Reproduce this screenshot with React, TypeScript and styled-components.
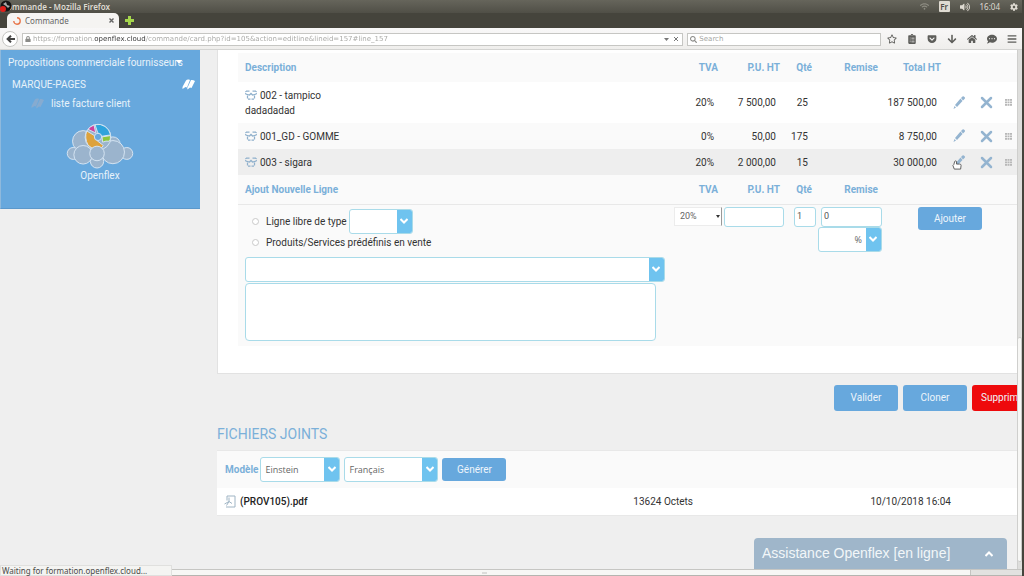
import React from 'react';
import styled, { createGlobalStyle, css } from 'styled-components';
import { FaRegStar, FaClipboardList, FaGetPocket, FaArrowDown, FaHome, FaBars, FaCommentDots, FaLock, FaSearch, FaVolumeUp, FaWifi, FaCog } from 'react-icons/fa';

const blue = '#67a8dd';
const headingBlue = '#7bb0d9';
const sky = '#6fc3ef';
const iconBlue = '#94b4d0';
const line = '#a9dbe9';
const uiFont = '"Noto Sans", "Open Sans", sans-serif';

const Global = createGlobalStyle`
  * { box-sizing: border-box; }
  body { margin: 0; overflow: hidden; font-family: Roboto, sans-serif; font-size: 10px; color: #333; }
  button, input, select, textarea { font: inherit; color: inherit; margin: 0; padding: 0; }
  svg { display: block; flex: none; }
`;

const Desktop = styled.div`
  height: 100vh;
  display: flex;
  flex-direction: column;
  background: #efefef;
  border-right: 2px solid #45443c;
`;

const TitleBar = styled.header`
  height: 13px;
  display: flex;
  align-items: center;
  gap: 10px;
  padding: 0 4px 0 2px;
  background: linear-gradient(#66655b, #504f47);
  color: #dfdbd2;
  font: 600 8px/13px ${uiFont};
`;

const WindowTitle = styled.div`
  position: relative;
  flex: 1;
`;

const CloseBadge = styled.span`
  position: absolute;
  left: -2px;
  top: 0;
`;

const Indicator = styled.span`
  display: flex;
  font-weight: 400;
`;

const Keyboard = styled.span`
  width: 11px;
  height: 11px;
  border-radius: 1px;
  background: #dfdbd2;
  color: #504f47;
  text-align: center;
  line-height: 11px;
`;

const TabStrip = styled.div`
  height: 15px;
  display: flex;
  align-items: center;
  gap: 6px;
  padding-left: 7px;
  background: #45443c;
`;

const Tab = styled.div`
  width: 112px;
  height: 15px;
  display: flex;
  align-items: center;
  gap: 4px;
  padding: 0 5px 0 6px;
  border-radius: 5px 5px 0 0;
  background: #f5f4f2;
  color: #666;
  font: 8px/15px ${uiFont};
  span { flex: 1; }
`;

const PlainButton = styled.button`
  display: flex;
  align-items: center;
  justify-content: center;
  border: 0;
  background: none;
  cursor: pointer;
`;

const Toolbar = styled.nav`
  height: 22px;
  display: flex;
  align-items: center;
  gap: 4px;
  padding: 1px 5px 0 2px;
  border-bottom: 1px solid #d4d4d2;
  background: linear-gradient(#f9f8f8, #efeeec);
  color: #5d5d5a;
`;

const BackButton = styled(PlainButton)`
  width: 16px;
  height: 16px;
  border: 1px solid #c5c5c2;
  border-radius: 8px;
  background: #fff;
`;

const Field = styled.label<{ $grow: number }>`
  flex: ${p => p.$grow} 1 0;
  min-width: 0;
  height: 13px;
  display: flex;
  align-items: center;
  gap: 2px;
  padding: 0 2px;
  border: 1px solid #c6c6c3;
  background: #fff;
  color: #8b8b88;
`;

const BarInput = styled.input<{ $url?: boolean }>`
  flex: 1;
  min-width: 0;
  height: 11px;
  border: 0;
  outline: 0;
  background: none;
  font: 7px/11px "DejaVu Sans", sans-serif;
  ${p => p.$url && css`
    color: transparent;
    background: linear-gradient(90deg, #a5a5a2 61px, #333 61px, #333 113px, #a5a5a2 113px);
    background-clip: text;
    -webkit-background-clip: text;
  `}
  &::placeholder { color: #a5a5a2; opacity: 1; }
`;

const Tools = styled.div`
  display: flex;
  align-items: center;
  gap: 10px;
  padding-left: 2px;
`;

const Viewport = styled.div`
  flex: 1;
  min-height: 0;
  display: flex;
`;

const Page = styled.div`
  position: relative;
  flex: 1;
  min-width: 0;
  display: flex;
  align-items: flex-start;
  gap: 17px;
  overflow: hidden;
`;

const Sidebar = styled.aside`
  width: 200px;
  height: 159px;
  flex: none;
  display: flex;
  flex-direction: column;
  padding: 3px 5px 0 7px;
  border-left: 1px solid #8fb9dc;
  border-bottom: 1px solid #5b98cb;
  background: ${blue};
  color: #e8f2fa;
`;

const MenuLink = styled.a<{ $indent?: number }>`
  height: 18px;
  display: flex;
  align-items: center;
  gap: 7px;
  padding-left: ${p => p.$indent || 0}px;
  color: inherit;
  text-decoration: none;
  white-space: nowrap;
`;

const MenuHeading = styled.h2`
  display: flex;
  justify-content: space-between;
  align-items: center;
  height: 19px;
  margin: 4px 0 0;
  padding-left: 4px;
  font-size: 10px;
  font-weight: 400;
`;

const Brand = styled.a`
  display: flex;
  flex-direction: column;
  align-items: center;
  gap: 1px;
  margin: 11px 3px 0 0;
  color: inherit;
  text-decoration: none;
  line-height: 12px;
`;

const Caret = styled.span`
  margin-left: -14px;
  border: 3px solid transparent;
  border-top: 4px solid #fff;
  border-bottom: 0;
`;

const Main = styled.main`
  flex: 1;
  min-width: 0;
`;

const OrderCard = styled.section`
  padding: 3px 0 27px 20px;
  border: 1px solid #e2e2e2;
  border-top: 0;
  border-right: 0;
  background: #fff;
`;

const Table = styled.table`
  width: 100%;
  table-layout: fixed;
  border-collapse: collapse;
  font: 10px/15px Roboto, sans-serif;
`;

const Row = styled.tr<{ $bg: string; $h: number }>`
  height: ${p => p.$h}px;
  background: ${p => p.$bg};
`;

const Th = styled.th<{ $left?: boolean }>`
  padding: 0 ${p => (p.$left ? 0 : 4)}px 0 ${p => (p.$left ? 7 : 0)}px;
  text-align: ${p => (p.$left ? 'left' : 'right')};
  color: ${headingBlue};
  font-weight: 700;
  white-space: nowrap;
`;

const Td = styled.td<{ $left?: boolean }>`
  padding: 0 ${p => (p.$left ? 0 : 8)}px 0 ${p => (p.$left ? 7 : 0)}px;
  text-align: ${p => (p.$left ? 'left' : 'right')};
  white-space: nowrap;
`;

const IconCell = styled.td`
  position: relative;
  padding: 0;
  button { margin: 0 auto; }
`;

const Pointer = styled.span`
  position: absolute;
  left: 7px;
  top: 11px;
`;

const ProductName = styled.div`
  display: flex;
  align-items: center;
  gap: 3px;
`;

const FormRow = styled.tr`
  border-top: 1px solid #e8e8e8;
  background: #fafafa;
`;

const FormCell = styled.td<{ $left?: number }>`
  padding: 2px 0 0 ${p => p.$left || 0}px;
  vertical-align: top;
`;

const Choice = styled.div<{ $h: number }>`
  height: ${p => p.$h}px;
  display: flex;
  align-items: center;
  gap: 2px;
  padding-left: 7px;
`;

const ChoiceLabel = styled.label`
  display: flex;
  align-items: center;
  gap: 7px;
`;

const ProductPicker = styled.div`
  padding-top: 7px;
`;

const Radio = styled.input`
  appearance: none;
  width: 7px;
  height: 7px;
  border: 1px solid #c9c9c9;
  border-radius: 50%;
  background: #fff;
`;

const SelectBox = styled.span<{ $w: string }>`
  width: ${p => p.$w};
  height: 25px;
  display: grid;
  grid-template-columns: 1fr 15px;
  overflow: hidden;
  border: 1px solid ${line};
  border-radius: 3px;
  background: #fff;
`;

const Select = styled.select<{ $right?: boolean }>`
  grid-area: 1 / 1 / 2 / 3;
  appearance: none;
  border: 0;
  outline: 0;
  background: none;
  padding: 0 19px 0 4px;
  font: 9px/23px "Open Sans", sans-serif;
  color: #666;
  text-align: ${p => (p.$right ? 'right' : 'left')};
  text-align-last: ${p => (p.$right ? 'right' : 'left')};
`;

const Chevron = styled.span`
  grid-area: 1 / 2 / 2 / 3;
  display: flex;
  align-items: center;
  justify-content: center;
  background: ${sky};
  pointer-events: none;
`;

const Note = styled.textarea`
  display: block;
  width: calc(100% - 18px);
  height: 58px;
  margin: 1px 0 5px;
  resize: none;
  border: 1px solid ${line};
  border-radius: 4px;
  background: #fff;
`;

const TextInput = styled.input<{ $w: number }>`
  display: block;
  width: ${p => p.$w}px;
  height: 20px;
  margin-left: auto;
  padding: 0 2px 1px;
  border: 1px solid ${line};
  border-radius: 3px;
  background: #fff;
  font-size: 9px;
  color: #555;
`;

const RateBox = styled.span`
  display: flex;
  align-items: center;
  height: 19px;
  padding-right: 1px;
  border: 1px solid #ececec;
  border-right: 1px solid #999;
  background: #fff;
  select {
    flex: 1;
    min-width: 0;
    appearance: none;
    border: 0;
    background: none;
    padding-left: 5px;
    font-size: 9px;
    color: #666;
  }
  span { margin: 0; border: 2px solid transparent; border-top: 3px solid #333; border-bottom: 0; }
`;

const Button = styled.button<{ $h: number; $danger?: boolean }>`
  width: 64px;
  height: ${p => p.$h}px;
  flex: none;
  border: 0;
  border-radius: 3px;
  background: ${p => (p.$danger ? '#ee0a0c' : blue)};
  color: #eef5fb;
  font-family: Roboto, sans-serif;
  cursor: pointer;
`;

const Actions = styled.div`
  display: flex;
  justify-content: flex-end;
  gap: 5px;
  margin: 11px -19px 15px 0;
`;

const SectionTitle = styled.h2`
  margin: 0 0 8px;
  color: ${headingBlue};
  font-size: 14px;
  font-weight: 400;
  line-height: 16px;
`;

const FilesCard = styled.section`
  border: 1px solid #e8e8e8;
  border-width: 1px 0;
  background: #fff;
`;

const Generator = styled.form`
  height: 37px;
  display: flex;
  align-items: center;
  gap: 4px;
  padding-left: 8px;
  background: #fafafa;
  label { display: flex; align-items: center; gap: 2px; color: ${headingBlue}; font-weight: 700; }
`;

const FileLink = styled.a`
  display: flex;
  align-items: center;
  gap: 4px;
  color: #222;
  text-decoration: none;
  font-weight: 500;
`;

const Chat = styled.button`
  position: absolute;
  right: 10px;
  bottom: 0;
  width: 253px;
  height: 31px;
  display: flex;
  align-items: center;
  justify-content: space-between;
  padding: 0 14px 0 8px;
  border: 0;
  border-radius: 4px 4px 0 0;
  background: #9fb6ca;
  color: #f2f6f9;
  font: 14px/31px "Liberation Sans", sans-serif;
`;

const VScroll = styled.div`
  width: 5px;
  display: flex;
  flex-direction: column;
  justify-content: flex-end;
  padding-bottom: 7px;
  border-left: 1px solid #cfcfcd;
  background: #dededc;
`;

const VThumb = styled.div`
  height: 44%;
  border: 1px solid #c9c9c7;
  border-left: 0;
  border-radius: 2px;
  background: #f7f7f5;
`;

const HScroll = styled.footer`
  position: relative;
  height: 7px;
  border-top: 1px solid #c6c6c3;
  border-bottom: 1px solid #b5b5b0;
  background: #e2e2e0;
`;

const HThumb = styled.div`
  width: 95%;
  height: 5px;
  display: flex;
  align-items: center;
  justify-content: center;
  border-right: 1px solid #c4c4c1;
  background: #f7f7f5;
  &::after { content: ''; width: 5px; height: 2px; background: #dcdcda; }
`;

const Status = styled.div`
  position: absolute;
  left: 0;
  bottom: -1px;
  width: 172px;
  height: 11px;
  padding-left: 1px;
  border: 1px solid #e0e0de;
  background: #f4f4f2;
  color: #4a4a48;
  font: 8px/10px ${uiFont};
  white-space: nowrap;
`;

const BoxIcon = () => (
  <svg width="12" height="11" viewBox="0 0 24 22" fill="none" stroke="#8fb0cc" strokeWidth="2.5">
    <path d="M2 2h7M15 2h7M1 8l8 2 3-3 3 3 8-2" />
    <path d="M2 2l-1 6M22 2l1 6" strokeDasharray="2 2" />
    <path d="M5 11v6M19 11v6M6 18h5M13 18h5" />
  </svg>
);

const PencilIcon = () => (
  <svg width="12" height="14" viewBox="0 0 24 28" fill={iconBlue}>
    <path d="M16 4l3-3q2-1 4 1t0 4l-3 3zM15 5l4 5L8 22l-4-4zM3 20l3 3-5 3z" />
  </svg>
);

const CrossIcon = () => (
  <svg width="13" height="13" viewBox="0 0 26 26" stroke={iconBlue} strokeWidth="5" strokeLinecap="round">
    <path d="M4 4l18 18M22 4L4 22" />
  </svg>
);

const GripIcon = () => (
  <svg width="7" height="7" viewBox="0 0 7 7" fill="#b8b8b8">
    {[0, 2.5, 5].map(y => [0, 2.5, 5].map(x => <rect key={`${x}-${y}`} x={x} y={y} width="2" height="1.8" />))}
  </svg>
);

const HandIcon = () => (
  <svg width="10" height="10" viewBox="0 0 22 22" fill="#fff" stroke="#555" strokeWidth="2" strokeLinejoin="round">
    <path d="M4 10L6 3q2-2 4 0v6h7q3 0 3 3l-1 8H5L2 12z" />
  </svg>
);

const BookmarkIcon = ({ fill }: { fill: string }) => (
  <svg width="13" height="11" viewBox="0 0 26 22" fill={fill}>
    <path d="M8 3q2-3 6-2l2 1-6 15-3-1-6 4q-1-4 2-8zM18 2q4-1 8 2l-7 14-3-1-5 4q-1-4 2-8z" />
  </svg>
);

const PdfIcon = () => (
  <svg width="12" height="13" viewBox="0 0 24 26" fill="none" stroke="#9fb4c4" strokeWidth="2">
    <path d="M6 11V2h16v22H4M1 18l9-5 6 4M10 5v8l-5 8" />
  </svg>
);

const Down = ({ up }: { up?: boolean }) => (
  <svg width="8" height="6" viewBox="0 0 8 6" fill="none" stroke="#fff" strokeWidth="2">
    <path d={up ? 'M0.5 5L4 1.5 7.5 5' : 'M0.5 1L4 4.5 7.5 1'} />
  </svg>
);

const Logo = () => (
  <svg width="68" height="46" viewBox="47 39 202 139" fill="#9bb4cd" stroke="#d5e4f2" strokeWidth="3">
    <circle cx="97" cy="94" r="32" />
    <circle cx="187" cy="103" r="22" />
    <circle cx="67" cy="131" r="18" />
    <circle cx="229" cy="131" r="18" />
    <circle cx="139" cy="155" r="20" />
    <circle cx="97" cy="135" r="28" />
    <circle cx="187" cy="127" r="35" />
    <circle cx="142" cy="82" r="39" />
    <path fill="#2fa3dc" d="M133 44a39 39 0 0 1 47 31l-26 4-13-11z" />
    <path fill="#8cc63f" d="M180 77q0 14-4 17-10-2-20 3l-2-16z" />
    <path fill="#dda23c" d="M108 63l23 14q-1 10 9 16l18 14q-4 8-14 13-22-2-32-14-12-22-4-43z" />
    <path fill="#cf3f9c" d="M112 58q7-9 18-13l5 24z" />
    <circle cx="142" cy="81" r="11" fill={blue} />
    <circle cx="139" cy="131" r="22" />
  </svg>
);

type PickerProps = { label: string; width: string; options: string[]; right?: boolean };
const Picker = ({ label, width, options, right }: PickerProps) => (
  <SelectBox $w={width}>
    <Select aria-label={label} $right={right}>
      {options.map(o => <option key={o}>{o}</option>)}
    </Select>
    <Chevron><Down /></Chevron>
  </SelectBox>
);

const lines = [
  { name: '002 - tampico', note: 'dadadadad', tva: '20%', pu: '7 500,00', qty: '25', total: '187 500,00', h: 41, bg: '#fff' },
  { name: '001_GD - GOMME', tva: '0%', pu: '50,00', qty: '175', total: '8 750,00', h: 26, bg: '#fafafa' },
  { name: '003 - sigara', tva: '20%', pu: '2 000,00', qty: '15', total: '30 000,00', h: 26, bg: '#eeeeee', hover: true },
];

const toolIcons = [
  { label: 'Marquer cette page', Icon: FaRegStar },
  { label: 'Marque-pages', Icon: FaClipboardList },
  { label: 'Pocket', Icon: FaGetPocket },
  { label: 'Téléchargements', Icon: FaArrowDown },
  { label: 'Accueil', Icon: FaHome },
  { label: 'Discussion', Icon: FaCommentDots },
  { label: 'Menu', Icon: FaBars },
];

export default function App() {
  return (
    <Desktop>
      <Global />
      <TitleBar>
        <WindowTitle>
          Commande - Mozilla Firefox
          <CloseBadge>
            <svg width="12" height="12" viewBox="0 0 12 12">
              <circle cx="6" cy="6" r="5.5" fill="#161616" />
              <path d="M3 4l3-2 1 3 3 1-2 2-2-2z" fill="#aaa" />
              <circle cx="3" cy="9" r="3" fill="#e0201c" />
            </svg>
          </CloseBadge>
        </WindowTitle>
        <Indicator><FaWifi size={9} color="#8d8c82" /></Indicator>
        <Keyboard>Fr</Keyboard>
        <Indicator><FaVolumeUp size={10} /></Indicator>
        <Indicator>16:04</Indicator>
        <Indicator><FaCog size={8} /></Indicator>
      </TitleBar>
      <TabStrip>
        <Tab>
          <svg width="8" height="8" viewBox="0 0 8 8" fill="none" stroke="#e8764a" strokeWidth="1.4"><path d="M4 .8A3.2 3.2 0 1 1 .8 4" /></svg>
          <span>Commande</span>
          <PlainButton aria-label="Fermer l’onglet">
            <svg width="5" height="5" viewBox="0 0 5 5" stroke="#666" strokeWidth="1.4"><path d="M.5.5l4 4M4.5.5l-4 4" /></svg>
          </PlainButton>
        </Tab>
        <PlainButton aria-label="Nouvel onglet">
          <svg width="9" height="9" viewBox="0 0 9 9" stroke="#a5d64c" strokeWidth="3"><path d="M4.500 0v9M0 4.500h9" /></svg>
        </PlainButton>
      </TabStrip>
      <Toolbar>
        <BackButton aria-label="Page précédente">
          <svg width="9" height="8" viewBox="0 0 9 8" fill="none" stroke="#444" strokeWidth="2"><path d="M9 4H2M5 .7L1.600 4 5 7.300" /></svg>
        </BackButton>
        <Field $grow={667}>
          <FaLock size={6} />
          <BarInput $url aria-label="Adresse" defaultValue="https://formation.openflex.cloud/commande/card.php?id=105&action=editline&lineid=157#line_157" />
          <svg width="16" height="6" viewBox="0 0 16 6" fill="#777"><path d="M0 2h5L2.500 5z" /><path d="M10 1l4 4M14 1l-4 4" stroke="#777" /></svg>
        </Field>
        <Field $grow={191}>
          <FaSearch size={7} />
          <BarInput aria-label="Recherche" placeholder="Search" />
        </Field>
        <Tools>
          {toolIcons.map(({ label, Icon }) => (
            <PlainButton key={label} aria-label={label}><Icon size={10} /></PlainButton>
          ))}
        </Tools>
      </Toolbar>
      <Viewport>
        <Page>
          <Sidebar>
            <MenuLink href="#propositions">Propositions commerciale fournisseurs<Caret /></MenuLink>
            <MenuHeading>MARQUE-PAGES<BookmarkIcon fill="#fff" /></MenuHeading>
            <MenuLink href="#factures" $indent={23}><BookmarkIcon fill="#86abd0" />liste facture client</MenuLink>
            <Brand href="#openflex"><Logo />Openflex</Brand>
          </Sidebar>
          <Main>
            <OrderCard>
              <Table>
                <colgroup>
                  <col />
                  {[48, 62, 32, 66, 63, 28, 28, 16].map((w, i) => <col key={i} width={w} />)}
                </colgroup>
                <tbody>
                  <Row $h={29} $bg="#fafafa">
                    <Th $left>Description</Th><Th>TVA</Th><Th>P.U. HT</Th><Th>Qté</Th><Th>Remise</Th><Th>Total HT</Th>
                    <td colSpan={3} />
                  </Row>
                  {lines.map(l => (
                    <Row key={l.name} $h={l.h} $bg={l.bg}>
                      <Td $left>
                        <ProductName><BoxIcon />{l.name}</ProductName>
                        {l.note}
                      </Td>
                      <Td>{l.tva}</Td><Td>{l.pu}</Td><Td>{l.qty}</Td><Td /><Td>{l.total}</Td>
                      <IconCell>
                        <PlainButton aria-label={`Modifier ${l.name}`}><PencilIcon /></PlainButton>
                        {l.hover && <Pointer><HandIcon /></Pointer>}
                      </IconCell>
                      <IconCell><PlainButton aria-label={`Supprimer ${l.name}`}><CrossIcon /></PlainButton></IconCell>
                      <IconCell><PlainButton aria-label={`Déplacer ${l.name}`}><GripIcon /></PlainButton></IconCell>
                    </Row>
                  ))}
                  <Row $h={29} $bg="#fafafa">
                    <Th $left>Ajout Nouvelle Ligne</Th><Th>TVA</Th><Th>P.U. HT</Th><Th>Qté</Th><Th>Remise</Th>
                    <td colSpan={4} />
                  </Row>
                  <FormRow>
                    <FormCell $left={7}>
                      <Choice $h={29}>
                        <ChoiceLabel><Radio type="radio" name="kind" />Ligne libre de type</ChoiceLabel>
                        <Picker label="Type de ligne" width="64px" options={['']} />
                      </Choice>
                      <Choice $h={14}>
                        <ChoiceLabel><Radio type="radio" name="kind" />Produits/Services prédéfinis en vente</ChoiceLabel>
                      </Choice>
                      <ProductPicker><Picker label="Produit" width="calc(100% - 9px)" options={['']} /></ProductPicker>
                      <Note aria-label="Description de la ligne" />
                    </FormCell>
                    <FormCell>
                      <RateBox><select aria-label="TVA"><option>20%</option></select><Caret /></RateBox>
                    </FormCell>
                    <FormCell><TextInput $w={60} aria-label="P.U. HT" /></FormCell>
                    <FormCell><TextInput $w={22} aria-label="Qté" defaultValue="1" /></FormCell>
                    <FormCell $left={2}>
                      <TextInput $w={61} aria-label="Remise" defaultValue="0" />
                      <Picker label="Type de remise" width="64px" options={['%']} right />
                    </FormCell>
                    <FormCell $left={36} colSpan={4}><Button $h={23}>Ajouter</Button></FormCell>
                  </FormRow>
                </tbody>
              </Table>
            </OrderCard>
            <Actions>
              <Button $h={26}>Valider</Button>
              <Button $h={26}>Cloner</Button>
              <Button $h={26} $danger>Supprimer</Button>
            </Actions>
            <SectionTitle>FICHIERS JOINTS</SectionTitle>
            <FilesCard>
              <Generator onSubmit={e => e.preventDefault()}>
                <label>Modèle <Picker label="Modèle" width="80px" options={['Einstein']} /></label>
                <Picker label="Langue" width="94px" options={['Français']} />
                <Button $h={23}>Générer</Button>
              </Generator>
              <Table>
                <colgroup><col /><col width={126} /><col width={258} /><col width={58} /></colgroup>
                <tbody>
                  <Row $h={27} $bg="#fff">
                    <Td $left><FileLink href="#prov105"><PdfIcon />(PROV105).pdf</FileLink></Td>
                    <Td>13624 Octets</Td>
                    <Td>10/10/2018 16:04</Td>
                    <td />
                  </Row>
                </tbody>
              </Table>
            </FilesCard>
          </Main>
          <Chat>Assistance Openflex [en ligne]<Down up /></Chat>
        </Page>
        <VScroll><VThumb /></VScroll>
      </Viewport>
      <HScroll>
        <HThumb />
        <Status>Waiting for formation.openflex.cloud...</Status>
      </HScroll>
    </Desktop>
  );
}
